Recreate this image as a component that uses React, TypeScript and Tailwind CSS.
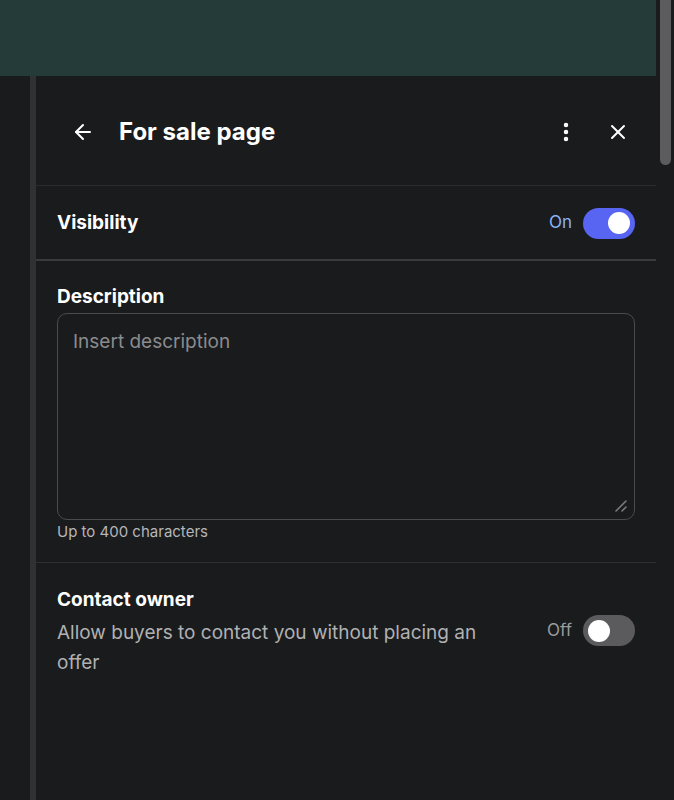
import { ArrowLeft, EllipsisVertical, X } from "lucide-react";

function Toggle({ on }: { on: boolean }) {
  return (
    <div
      className={`flex h-[31px] w-[52px] items-center rounded-full px-[5px] ${
        on ? "justify-end bg-[#5865f2]" : "justify-start bg-[#5b5b5e]"
      }`}
    >
      <div className="h-[22px] w-[22px] rounded-full bg-white" />
    </div>
  );
}

export default function App() {
  return (
    <div
      className="flex h-[800px] w-[674px] overflow-hidden bg-[#1a1b1d] text-white"
      style={{ fontFamily: "Inter, 'Noto Sans', sans-serif" }}
    >
      <div className="flex flex-1 flex-col">
        <div className="h-[76px] bg-[#243b3a]" />
        <div className="flex flex-1">
          <div className="w-[30px] bg-[#1a1b1d]" />
          <div className="w-[6px] bg-[#303133]" />
          <div className="flex flex-1 flex-col">
            {/* Header */}
            <div className="flex h-[110px] items-center border-b border-[#2a2b2d] pl-[35px] pr-[26px] pt-[2px]">
              <ArrowLeft className="h-[24px] w-[24px]" strokeWidth={2} />
              <h1 className="ml-[24px] flex-1 text-[24px] font-bold">For sale page</h1>
              <EllipsisVertical className="h-[24px] w-[24px]" strokeWidth={2.5} />
              <X className="ml-[28px] h-[24px] w-[24px]" strokeWidth={2} />
            </div>

            {/* Visibility */}
            <div className="flex h-[75px] items-center justify-between border-b-2 border-[#3a3b3d] pl-[21px] pr-[21px] pt-[1px]">
              <span className="text-[19px] font-bold">Visibility</span>
              <div className="flex items-center gap-[11px]">
                <span className="text-[17px] text-[#8ab4f8]">On</span>
                <Toggle on />
              </div>
            </div>

            {/* Description */}
            <div className="border-b border-[#2e2f31] pb-[20px] pl-[21px] pr-[21px] pt-[24px]">
              <label className="block text-[19px] font-bold leading-[24px]">Description</label>
              <div className="relative mt-[4px]">
                <textarea
                  placeholder="Insert description"
                  className="block h-[207px] w-full resize-none rounded-[10px] border border-[#4a4b4e] bg-transparent px-[15px] py-[14px] text-[19px] text-white placeholder:text-[#8a8b8d] focus:outline-none"
                />
                <svg
                  className="pointer-events-none absolute bottom-[7px] right-[7px]"
                  width="14"
                  height="14"
                  viewBox="0 0 14 14"
                >
                  <path d="M2 12 L12 2 M8 12 L12 8" stroke="#7a7b7d" strokeWidth="1.6" strokeLinecap="round" />
                </svg>
              </div>
              <p className="mt-[2px] text-[15px] leading-[20px] text-[#b5b6b8]">Up to 400 characters</p>
            </div>

            {/* Contact owner */}
            <div className="pl-[21px] pr-[21px] pt-[25px]">
              <div className="text-[19px] font-bold leading-[24px]">Contact owner</div>
              <div className="mt-[6px] flex items-start justify-between">
                <p className="w-[460px] text-[19px] leading-[30px] text-[#b0b1b3]">
                  Allow buyers to contact you without placing an offer
                </p>
                <div className="mt-[-3px] flex items-center gap-[11px]">
                  <span className="text-[17px] text-[#9a9b9d]">Off</span>
                  <Toggle on={false} />
                </div>
              </div>
            </div>
          </div>
        </div>
      </div>

      {/* Scrollbar */}
      <div className="w-[18px] bg-[#1a1b1d] pl-[4px] pr-[3px]">
        <div className="h-[165px] rounded-b-full bg-[#5c5c5e]" />
      </div>
    </div>
  );
}
